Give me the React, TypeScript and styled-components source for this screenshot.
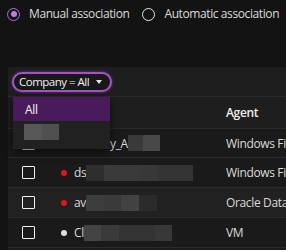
import React from "react";
import styled, { createGlobalStyle } from "styled-components";

const Global = createGlobalStyle`
  html, body { margin: 0; padding: 0; background: #131313; }
  body { font-family: "Open Sans", "Noto Sans", sans-serif; color: #e0e0e0; overflow: hidden; letter-spacing: -0.35px; }
  * { box-sizing: border-box; }
`;

const Page = styled.div`
  width: 286px;
  height: 250px;
  overflow: hidden;
  background: #131313;
`;

const RadioRow = styled.div`
  display: flex;
  gap: 13px;
  padding: 7px 0 0 7px;
  height: 67px;
  align-items: flex-start;
  white-space: nowrap;
`;

const RadioLabel = styled.label`
  display: flex;
  align-items: center;
  gap: 9px;
  font-size: 12px;
  letter-spacing: -0.4px;
  color: #dcdcdc;
  line-height: 14px;
  white-space: nowrap;
`;

const RadioCircle = styled.span<{ $on?: boolean }>`
  width: 13px;
  height: 13px;
  flex: none;
  border-radius: 50%;
  border: 1.5px solid ${(p) => (p.$on ? "#b56ad0" : "#e6e6e6")};
  display: flex;
  align-items: center;
  justify-content: center;
  &::after {
    content: "";
    width: 6px;
    height: 6px;
    border-radius: 50%;
    background: ${(p) => (p.$on ? "#c27ddb" : "transparent")};
  }
`;

const Panel = styled.div`
  margin-left: 8px;
  position: relative;
  background: #1e1e1e;
`;

const Toolbar = styled.div`
  height: 30px;
  display: flex;
  align-items: center;
  padding-left: 4px;
  border-bottom: 1px solid #2c2c2c;
`;

const FilterPill = styled.div`
  height: 20px;
  width: 100px;
  border: 2px solid #a552c8;
  border-radius: 10px;
  box-shadow: 0 0 3px rgba(170, 80, 210, 0.6);
  display: flex;
  align-items: center;
  justify-content: space-between;
  padding: 0 6px 0 5px;
  font-size: 11.5px;
  letter-spacing: -0.5px;
  color: #f0f0f0;
  background: #181818;
  white-space: nowrap;
`;

const Caret = styled.span`
  width: 0;
  height: 0;
  border-left: 3.5px solid transparent;
  border-right: 3.5px solid transparent;
  border-top: 4px solid #e8e8e8;
  margin-right: 2px;
`;

const Table = styled.div`
  display: flex;
  flex-direction: column;
`;

const Row = styled.div<{ $bg?: string; $h?: number }>`
  display: grid;
  grid-template-columns: 47px 171px 1fr;
  align-items: center;
  height: ${(p) => p.$h ?? 30}px;
  background: ${(p) => p.$bg ?? "#1a1a1a"};
  border-bottom: 1px solid #2b2b2b;
  font-size: 12px;
  color: #dadada;
  white-space: nowrap;
`;

const HeaderCell = styled.div`
  font-weight: 600;
  color: #eeeeee;
  font-size: 12px;
`;

const AgentCell = styled.div`
  overflow: hidden;
`;

const CheckCell = styled.div`
  display: flex;
  justify-content: center;
`;

const Check = styled.span`
  width: 13px;
  height: 13px;
  border: 1.5px solid #f2f2f2;
  border-radius: 1px;
  margin-left: -7px;
`;

const NameCell = styled.div`
  display: flex;
  align-items: center;
  overflow: hidden;
`;

const Spacer = styled.span<{ $w: number }>`
  width: ${(p) => p.$w}px;
  flex: none;
`;

const Dot = styled.span<{ $c: string }>`
  width: 6px;
  height: 6px;
  border-radius: 50%;
  background: ${(p) => p.$c};
  margin: 0 7px 0 6px;
  flex: none;
`;

const NameText = styled.span`
  flex: none;
  color: #dadada;
`;

const Redact = styled.span`
  display: flex;
  height: 16px;
  flex: none;
`;

const Seg = styled.span<{ $w: number; $c: string }>`
  width: ${(p) => p.$w}px;
  height: 100%;
  background: ${(p) => p.$c};
`;

const Menu = styled.div`
  position: absolute;
  left: 5px;
  top: 30px;
  width: 97px;
  background: #212121;
  box-shadow: 0 3px 8px rgba(0, 0, 0, 0.6);
  padding-bottom: 6px;
  z-index: 2;
`;

const MenuItem = styled.div<{ $active?: boolean }>`
  height: ${(p) => (p.$active ? 24 : 22)}px;
  display: flex;
  align-items: center;
  padding-left: ${(p) => (p.$active ? 12 : 11)}px;
  background: ${(p) => (p.$active ? "#4a1b5c" : "transparent")};
  color: #f2f2f2;
  font-size: 12px;
`;

type Block = [number, string];

const Redacted = ({ segs }: { segs: Block[] }) => (
  <Redact>
    {segs.map(([w, c], i) => (
      <Seg key={i} $w={w} $c={c} />
    ))}
  </Redact>
);

const rows: {
  dot: string;
  name: string;
  segs: Block[];
  agent: string;
  bg: string;
}[] = [
  {
    dot: "#e41414",
    name: "ds",
    segs: [
      [18, "#2e2e2e"],
      [35, "#3a3a3a"],
      [19, "#383838"],
      [35, "#343434"],
    ],
    agent: "Windows File",
    bg: "#1a1a1a",
  },
  {
    dot: "#e41414",
    name: "av",
    segs: [
      [18, "#3d3d3d"],
      [17, "#3a3a3a"],
      [18, "#424242"],
      [18, "#2a2a2a"],
    ],
    agent: "Oracle Database",
    bg: "#212121",
  },
  {
    dot: "#dcdcdc",
    name: "Cl",
    segs: [
      [17, "#444444"],
      [18, "#3a3a3a"],
      [36, "#333333"],
      [17, "#383838"],
    ],
    agent: "VM",
    bg: "#1a1a1a",
  },
];

export default function App() {
  return (
    <Page>
      <Global />
      <RadioRow>
        <RadioLabel>
          <RadioCircle $on />
          Manual association
        </RadioLabel>
        <RadioLabel>
          <RadioCircle />
          Automatic association
        </RadioLabel>
      </RadioRow>
      <Panel>
        <Toolbar>
          <FilterPill>
            <span>Company = All</span>
            <Caret />
          </FilterPill>
        </Toolbar>
        <Table>
          <Row $bg="#1e1e1e" $h={32}>
            <div />
            <div />
            <HeaderCell>Agent</HeaderCell>
          </Row>
          <Row $bg="#1a1a1a" $h={29}>
            <CheckCell>
              <Check />
            </CheckCell>
            <NameCell>
              <Spacer $w={55} />
              <NameText>y_A</NameText>
              <Redacted
                segs={[
                  [15, "#3a3a3a"],
                  [17, "#484848"],
                ]}
              />
            </NameCell>
            <AgentCell>Windows File</AgentCell>
          </Row>
          {rows.map((r, i) => (
            <Row key={i} $bg={r.bg}>
              <CheckCell>
                <Check />
              </CheckCell>
              <NameCell>
                <Dot $c={r.dot} />
                <NameText>{r.name}</NameText>
                <Redacted segs={r.segs} />
              </NameCell>
              <AgentCell>{r.agent}</AgentCell>
            </Row>
          ))}
          <Row $bg="#1a1a1a" />
        </Table>
        <Menu>
          <MenuItem $active>All</MenuItem>
          <MenuItem>
            <Redacted
              segs={[
                [18, "#575757"],
                [17, "#505050"],
              ]}
            />
          </MenuItem>
        </Menu>
      </Panel>
    </Page>
  );
}
